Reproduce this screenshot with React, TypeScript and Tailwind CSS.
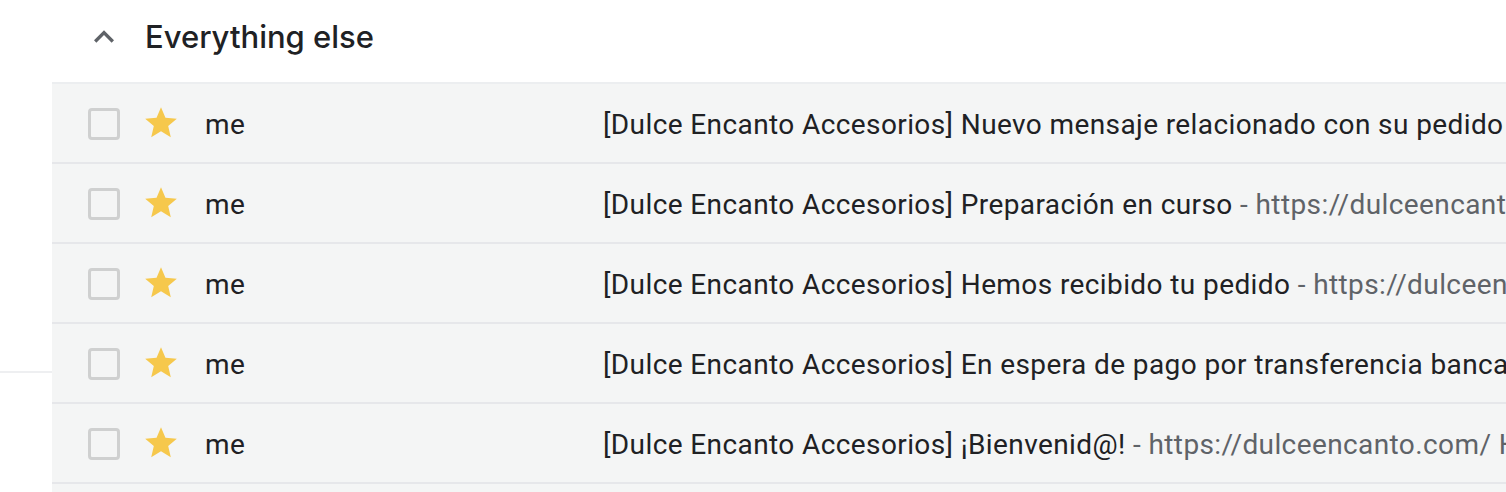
type Mail = {
  subject: string
  snippet?: string
}

const mails: Mail[] = [
  { subject: '[Dulce Encanto Accesorios] Nuevo mensaje relacionado con su pedido', snippet: ' - https://dulceencanto.com/ Hola' },
  { subject: '[Dulce Encanto Accesorios] Preparación en curso', snippet: ' - https://dulceencanto.com/ Hola, su pedido' },
  { subject: '[Dulce Encanto Accesorios] Hemos recibido tu pedido', snippet: ' - https://dulceencanto.com/ Hola' },
  { subject: '[Dulce Encanto Accesorios] En espera de pago por transferencia bancaria', snippet: ' - https://dulceencanto.com/' },
  { subject: '[Dulce Encanto Accesorios] ¡Bienvenid@!', snippet: ' - https://dulceencanto.com/ Hola, gracias por crear' },
]

function Star() {
  return (
    <svg width="38" height="38" viewBox="0 0 24 24" className="fill-[#f6c84c]">
      <path d="M12 17.27L18.18 21l-1.64-7.03L22 9.24l-7.19-.61L12 2 9.19 8.63 2 9.24l5.46 4.73L5.82 21z" />
    </svg>
  )
}

function MailRow({ mail }: { mail: Mail }) {
  return (
    <div className="flex items-center h-[80px] border-b-2 border-[#e6e7ea] bg-[#f4f5f5] text-[28px] tracking-[0.4px] font-['Roboto',sans-serif] text-[#202124] whitespace-nowrap overflow-hidden">
      {/* Checkbox */}
      <div className="w-[36px] shrink-0 ml-[36px] mt-[2px]">
        <div className="w-[32px] h-[32px] rounded-[4px] border-[3px] border-[#cfd0d0]" />
      </div>
      {/* Star */}
      <div className="w-[40px] shrink-0 ml-[18px]">
        <Star />
      </div>
      {/* Sender */}
      <div className="w-[421px] shrink-0 pl-[23px] mt-[3px]">me</div>
      {/* Subject + snippet */}
      <div className="overflow-hidden mt-[3px]">
        <span>{mail.subject}</span>
        <span className="text-[#5f6368]">{mail.snippet}</span>
      </div>
    </div>
  )
}

export default function App() {
  return (
    <div className="w-[1506px] h-[492px] bg-white flex overflow-hidden">
      {/* Left rail */}
      <div className="w-[52px] shrink-0 flex flex-col">
        <div className="h-[371px]" />
        <div className="h-[2px] bg-[#eeeff1]" />
      </div>
      {/* Main */}
      <div className="flex-1 flex flex-col min-w-0">
        {/* Section header */}
        <div className="h-[82px] flex items-center shrink-0">
          <div className="w-[93px] flex justify-end pr-[21px]">
            <svg width="40" height="40" viewBox="0 0 24 24" className="fill-[#5f6368] -mt-[9px]">
              <path d="M12 8l-6 6 1.41 1.41L12 10.83l4.59 4.58L18 14z" />
            </svg>
          </div>
          <h2 className="text-[31px] font-['Inter',sans-serif] font-medium text-[#202124] -mt-[8px]">
            Everything else
          </h2>
        </div>
        <div className="border-t-2 border-[#eceef0]">
          {mails.map((m, i) => (
            <MailRow key={i} mail={m} />
          ))}
          <div className="h-[20px] bg-[#f4f5f5]" />
        </div>
      </div>
    </div>
  )
}
